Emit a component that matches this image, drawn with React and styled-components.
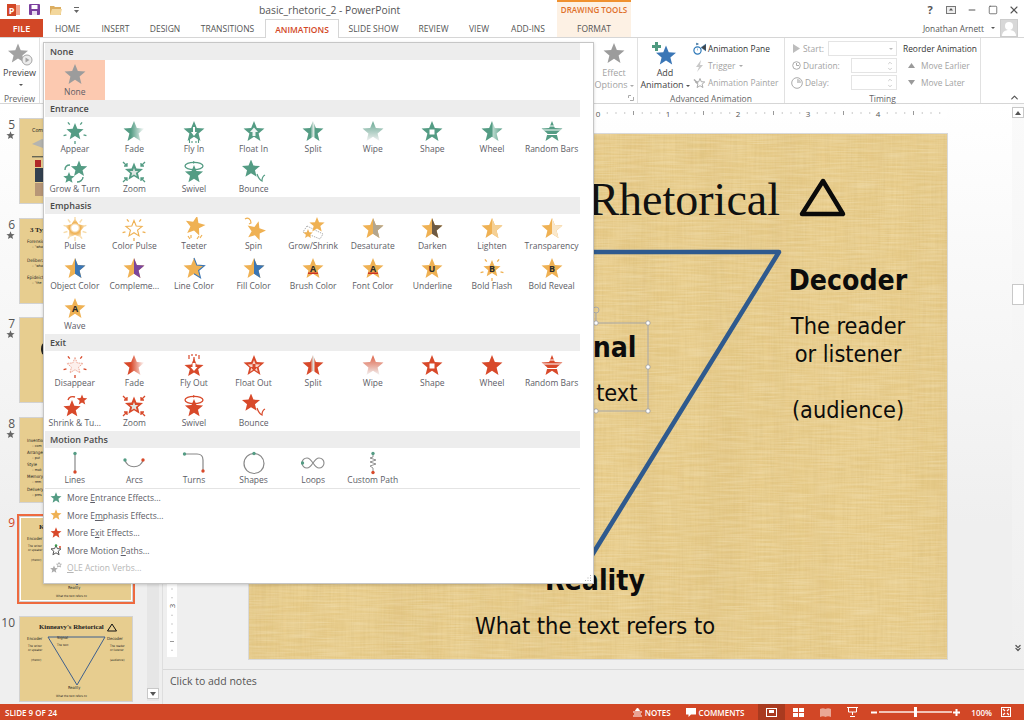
import React from "react";
import styled, { createGlobalStyle } from "styled-components";
import { Minus, Square, X, ChevronUp, ChevronDown, ChevronsDown } from "lucide-react";

const GlobalStyle = createGlobalStyle`
  html, body { margin: 0; padding: 0; background: #fff; }
  body { font-family: "Open Sans", "Liberation Sans", sans-serif; color: #444; }
  * { box-sizing: border-box; }
`;

const TONES = {
  green: "#549c84",
  orange: "#efb153",
  red: "#d8492a",
  gray: "#9c9c9c",
  blue: "#3a76b6",
  purple: "#7a469e",
};

const starPts = (cx, cy, R, r = R * 0.44) => {
  const out = [];
  for (let i = 0; i < 10; i++) {
    const a = (-90 + i * 36) * (Math.PI / 180);
    const d = i % 2 === 0 ? R : r;
    out.push([+(cx + d * Math.cos(a)).toFixed(2), +(cy + d * Math.sin(a)).toFixed(2)]);
  }
  return out;
};
const str = (p) => p.map((q) => q.join(",")).join(" ");
const starStr = (cx, cy, R, r) => str(starPts(cx, cy, R, r));
const rightHalf = (cx, cy, R) => str(starPts(cx, cy, R).slice(0, 6));

const Rays = ({ color, r1 = 10, r2 = 12, n = 5, offset = -54, width = 1.3 }) => {
  const lines = [];
  for (let i = 0; i < n; i++) {
    const a = (offset + (i * 360) / n) * (Math.PI / 180);
    lines.push(
      <line
        key={i}
        x1={12 + r1 * Math.cos(a)}
        y1={12 + r1 * Math.sin(a)}
        x2={12 + r2 * Math.cos(a)}
        y2={12 + r2 * Math.sin(a)}
        stroke={color}
        strokeWidth={width}
      />
    );
  }
  return <>{lines}</>;
};

const Corners = ({ c }) => (
  <g stroke={c} strokeWidth="1.3" fill="none">
    <path d="M1 2l4 4M5 3v3H2M23 2l-4 4M19 3v3h3M1 22l4-4M5 21v-3H2M23 22l-4-4M19 21v-3h3" />
  </g>
);

const Dot = ({ x, y, c }) => <circle cx={x} cy={y} r="1.7" fill={c} />;

const EffectIcon = ({ kind, tone = "green", letter, bar }) => {
  const c = TONES[tone];
  const id = `${kind}-${tone}`;
  const plain = <polygon points={starStr(12, 12, 11)} fill={c} />;
  let body = plain;
  if (kind === "appear") {
    body = (
      <>
        <polygon points={starStr(12, 12, 9)} fill={c} />
        <Rays color={c} r1={9} r2={12} />
      </>
    );
  } else if (kind === "fade" || kind === "wipe" || kind === "split" || kind === "wheel") {
    const stops = {
      fade: [[0, c], [0.35, c], [1, "#fff"]],
      wipe: [[0, c], [1, "#f2f2f2"]],
      split: [[0, c], [0.38, c], [0.52, "#dfe9e4"], [0.62, c], [1, c]],
      wheel: [[0, c], [0.5, c], [0.55, "#b9d9cd"], [1, c]],
    }[kind];
    const vertical = kind === "wipe";
    body = (
      <>
        <defs>
          <linearGradient id={id} x1="0" y1="0" x2={vertical ? "0" : "1"} y2={vertical ? "1" : "0"}>
            {stops.map(([o, col]) => <stop key={o} offset={o} stopColor={col} stopOpacity={kind === "wipe" && o === 0 ? 0.85 : 1} />)}
          </linearGradient>
        </defs>
        <polygon points={starStr(12, 12, 11)} fill={`url(#${id})`} />
      </>
    );
  } else if (kind === "flyin") {
    body = (
      <>
        {plain}
        <path d="M12 8l3 4h-2v5h-2v-5H9z" fill="#fff" transform="rotate(180 12 12)" />
        <path d="M7.500 19v4M10 21v2M14 21v2M16.500 19v4" stroke={c} strokeWidth="1.1" />
      </>
    );
  } else if (kind === "flyout") {
    body = (
      <>
        <polygon points={starStr(12, 14, 10)} fill={c} />
        <path d="M12 9l3.500 4h-2v4h-3v-4h-2z" fill="#fff" transform="rotate(180 12 13)" />
        <path d="M7 1v4M10 0v2M14 0v2M17 1v4M12 3v3" stroke={c} strokeWidth="1.2" />
      </>
    );
  } else if (kind === "floatin") {
    body = (
      <>
        {plain}
        <path d="M12 7.500l4 4.500h-2.500v4h-3v-4H8z" fill="#fff" opacity=".9" />
      </>
    );
  } else if (kind === "floatout") {
    body = (
      <>
        {plain}
        <polygon points={starStr(12, 12.5, 6.5)} fill="#f7d5c9" />
        <path d="M12 17l3.500-4h-2v-3h-3v3h-2z" fill={c} />
      </>
    );
  } else if (kind === "shape") {
    body = (
      <>
        {plain}
        <rect x="9.500" y="9.500" width="5" height="5" fill="#fff" />
      </>
    );
  } else if (kind === "bars") {
    body = (
      <>
        {plain}
        <path d="M0 6h24M0 10h24M0 14.500h24" stroke="#fff" strokeWidth="1.1" />
      </>
    );
  } else if (kind === "grow") {
    body = (
      <>
        <polygon points={starStr(16, 9, 8.5)} fill={c} />
        <polygon points={starStr(6, 18, 6)} fill={c} />
        <path d="M2 10c0-3 2-5 5-5M14 22c3 0 6-2 6-5" stroke={c} strokeWidth="1.4" fill="none" />
      </>
    );
  } else if (kind === "shrink") {
    body = (
      <>
        <polygon points={starStr(9, 15, 9)} fill={c} />
        <polygon points={starStr(19, 6, 5.5)} fill={c} />
        <path d="M5 6c1-3 4-4 7-3" stroke={c} strokeWidth="1.4" fill="none" />
      </>
    );
  } else if (kind === "zoom") {
    body = (
      <>
        <polygon points={starStr(12, 12, 9.5)} fill={c} />
        <polygon points={starStr(12, 12.5, 4.500)} fill="#dfe6e2" />
        <Corners c={c} />
      </>
    );
  } else if (kind === "swivel") {
    body = (
      <>
        <polygon points={starStr(12, 14.5, 9.5)} fill={c} />
        <ellipse cx="12" cy="6" rx="9" ry="3.600" fill="none" stroke={c} strokeWidth="1.3" />
        <path d="M11 1l3 1.400-3 1.400z" fill={c} />
      </>
    );
  } else if (kind === "bounce") {
    body = (
      <>
        <polygon points={starStr(9, 9, 9.5)} fill={c} />
        <path d="M15 14c1 3 3 6 5 7 0-3 1-5 3-6" stroke={c} strokeWidth="1.2" fill="none" />
      </>
    );
  } else if (kind === "pulse") {
    body = (
      <>
        <defs>
          <radialGradient id={id}>
            <stop offset="0.3" stopColor="#fff" />
            <stop offset="0.55" stopColor={c} />
            <stop offset="1" stopColor="#f9e2bb" />
          </radialGradient>
        </defs>
        <Rays color="#f7dcab" r1={8} r2={12} n={10} offset={-18} width={1.4} />
        <polygon points={starStr(12, 12, 10.5, 6)} fill={`url(#${id})`} />
      </>
    );
  } else if (kind === "colorpulse") {
    body = (
      <>
        <polygon points={starStr(12, 12, 8.5)} fill="#fff" stroke={c} strokeWidth="1.1" />
        <Rays color={c} r1={9} r2={12} />
      </>
    );
  } else if (kind === "teeter") {
    body = (
      <>
        <polygon points={starStr(13, 9, 10.5)} fill={c} transform="rotate(12 13 9)" />
        <path d="M6 19l2 3M9 18l0 3M17 19l-2 3M20 18l-2 3" stroke={c} strokeWidth="1.2" />
      </>
    );
  } else if (kind === "spin") {
    body = (
      <>
        <polygon points={starStr(14, 14, 10)} fill={c} transform="rotate(15 14 14)" />
        <path d="M3 2c3-2 6 0 6 4l-2 1" stroke={c} strokeWidth="1.2" fill="none" />
      </>
    );
  } else if (kind === "growshrink") {
    body = (
      <>
        <path d="M6 9l16 8-3 5L2 15z" fill="#fff" stroke="#999" strokeWidth=".8" strokeDasharray="1.400 1" />
        <polygon points={starStr(16, 8, 8)} fill={c} />
        <polygon points={starStr(7, 17, 5)} fill={c} />
      </>
    );
  } else if (kind === "half") {
    body = (
      <>
        {plain}
        <polygon points={rightHalf(12, 12, 11)} fill={TONES[letter] || letter} />
      </>
    );
  } else if (kind === "linecolor") {
    body = (
      <>
        {plain}
        <polyline points={rightHalf(12, 12, 11)} fill="none" stroke={TONES.blue} strokeWidth="1.1" />
      </>
    );
  } else if (kind === "text" || kind === "flash") {
    body = (
      <>
        {kind === "flash" ? (
          <>
            <polygon points={starStr(12, 12, 9)} fill={c} />
            <Rays color={c} r1={9} r2={12} />
          </>
        ) : plain}
        <text x="12" y="15" textAnchor="middle" fontSize="9" fontWeight="700" fontFamily="Open Sans, sans-serif" fill="#2a2a2a">{letter}</text>
        {bar && <rect x="7" y="15.500" width="10" height="1.400" fill="#c8281e" />}
      </>
    );
  } else if (kind === "disappear") {
    body = (
      <>
        <polygon points={starStr(12, 12, 8.5)} fill="#fdf0ec" stroke="#eba08d" strokeWidth=".9" strokeDasharray="1.600 .8" />
        <Rays color={c} r1={9} r2={12} />
      </>
    );
  } else if (kind === "lines") {
    body = (
      <>
        <path d="M12 2v19" stroke="#888" strokeWidth="1.2" />
        <Dot x={12} y={2.5} c={TONES.green} />
        <Dot x={12} y={21} c={TONES.red} />
      </>
    );
  } else if (kind === "arcs") {
    body = (
      <>
        <path d="M3 9c2 9 16 9 18 0" stroke="#888" strokeWidth="1.2" fill="none" />
        <Dot x={3} y={9} c={TONES.green} />
        <Dot x={21} y={9} c={TONES.red} />
      </>
    );
  } else if (kind === "turns") {
    body = (
      <>
        <path d="M2 3h13c4 0 6 2 6 6v11" stroke="#888" strokeWidth="1.2" fill="none" />
        <Dot x={2.5} y={3} c={TONES.green} />
        <Dot x={21} y={20} c={TONES.red} />
      </>
    );
  } else if (kind === "shapes") {
    body = (
      <>
        <circle cx="12" cy="12.500" r="10" stroke="#888" strokeWidth="1.2" fill="none" />
        <Dot x={12} y={2.5} c={TONES.green} />
      </>
    );
  } else if (kind === "loops") {
    body = (
      <>
        <path d="M12 12c-2-3-4-5-6-5a5 5 0 0 0 0 10c2 0 4-2 6-5s4-5 6-5a5 5 0 0 1 0 10c-2 0-4-2-6-5z" stroke="#888" strokeWidth="1.1" fill="none" />
        <Dot x={1.5} y={12} c={TONES.green} />
      </>
    );
  } else if (kind === "custom") {
    body = (
      <>
        <path d="M12 3v3l-3 1 6 2-6 2 6 2-6 2 3 2v3" stroke="#888" strokeWidth=".9" fill="none" />
        <Dot x={12} y={2.5} c={TONES.green} />
        <Dot x={12} y={21.5} c={TONES.red} />
      </>
    );
  }
  return <svg width="24" height="24" viewBox="0 0 24 24">{body}</svg>;
};

const effect = (label, kind, tone, extra) => ({ label, kind, tone, ...extra });

const SECTIONS = [
  { title: "None", items: [effect("None", "plain", "gray", { active: true })] },
  {
    title: "Entrance",
    items: [
      effect("Appear", "appear", "green"), effect("Fade", "fade", "green"), effect("Fly In", "flyin", "green"),
      effect("Float In", "floatin", "green"), effect("Split", "split", "green"), effect("Wipe", "wipe", "green"),
      effect("Shape", "shape", "green"), effect("Wheel", "wheel", "green"), effect("Random Bars", "bars", "green"),
      effect("Grow & Turn", "grow", "green"), effect("Zoom", "zoom", "green"), effect("Swivel", "swivel", "green"),
      effect("Bounce", "bounce", "green"),
    ],
  },
  {
    title: "Emphasis",
    items: [
      effect("Pulse", "pulse", "orange"), effect("Color Pulse", "colorpulse", "orange"), effect("Teeter", "teeter", "orange"),
      effect("Spin", "spin", "orange"), effect("Grow/Shrink", "growshrink", "orange"),
      effect("Desaturate", "half", "orange", { letter: "#b3a68f" }), effect("Darken", "half", "orange", { letter: "#6d5a44" }),
      effect("Lighten", "half", "orange", { letter: "#f5d094" }), effect("Transparency", "half", "orange", { letter: "#fae8cb" }),
      effect("Object Color", "half", "orange", { letter: "blue" }), effect("Compleme...", "half", "orange", { letter: "purple" }),
      effect("Line Color", "linecolor", "orange"), effect("Fill Color", "half", "orange", { letter: "blue" }),
      effect("Brush Color", "text", "orange", { letter: "A", bar: true }), effect("Font Color", "text", "orange", { letter: "A", bar: true }),
      effect("Underline", "text", "orange", { letter: "U" }), effect("Bold Flash", "flash", "orange", { letter: "B" }),
      effect("Bold Reveal", "text", "orange", { letter: "B" }), effect("Wave", "text", "orange", { letter: "A" }),
    ],
  },
  {
    title: "Exit",
    items: [
      effect("Disappear", "disappear", "red"), effect("Fade", "fade", "red"), effect("Fly Out", "flyout", "red"),
      effect("Float Out", "floatout", "red"), effect("Split", "split", "red"), effect("Wipe", "wipe", "red"),
      effect("Shape", "shape", "red"), effect("Wheel", "plain", "red"), effect("Random Bars", "bars", "red"),
      effect("Shrink & Tu...", "shrink", "red"), effect("Zoom", "zoom", "red"), effect("Swivel", "swivel", "red"),
      effect("Bounce", "bounce", "red"),
    ],
  },
  {
    title: "Motion Paths",
    items: [
      effect("Lines", "lines"), effect("Arcs", "arcs"), effect("Turns", "turns"),
      effect("Shapes", "shapes"), effect("Loops", "loops"), effect("Custom Path", "custom"),
    ],
  },
];

const Page = styled.div`
  position: relative;
  width: 1024px;
  height: 720px;
  overflow: hidden;
  display: flex;
  flex-direction: column;
  background: #fff;
`;

const TitleBar = styled.div`
  height: 19px;
  display: flex;
  align-items: center;
  position: relative;
`;

const QuickAccess = styled.div`
  display: flex;
  align-items: center;
  gap: 9px;
  padding-left: 7px;
  width: 259px;
`;

const DocTitle = styled.div`
  width: 298px;
  font-size: 10.3px;
  color: #555;
`;

const ToolsTitle = styled.div`
  width: 74px;
  height: 19px;
  background: #fdf1e4;
  border-top: 2px solid #f0912f;
  color: #e0702a;
  font-size: 8px;
  font-weight: 600;
  text-align: center;
  line-height: 16px;
`;

const WindowButtons = styled.div`
  margin-left: auto;
  display: flex;
  align-items: center;
  gap: 9px;
  padding-right: 4px;
  color: #555;
`;

const WinButton = styled.div`
  width: 12px;
  display: flex;
  justify-content: center;
  font-size: 11px;
  font-weight: 700;
`;

const TabRow = styled.div`
  height: 19px;
  display: flex;
  align-items: stretch;
  border-bottom: 1px solid #d6d6d6;
`;

const FileTab = styled.div`
  width: 43px;
  margin-right: 1px;
  background: #d24726;
  color: #fff;
  font-size: 9px;
  font-weight: 600;
  display: flex;
  align-items: center;
  justify-content: center;
`;

const Tab = styled.div`
  width: ${(p) => p.$w}px;
  font-size: 8.5px;
  white-space: nowrap;
  display: flex;
  align-items: center;
  justify-content: center;
  color: ${(p) => (p.$active ? "#d24726" : "#555")};
  background: ${(p) => (p.$active ? "#fff" : p.$tool ? "#fdf1e4" : "transparent")};
  height: ${(p) => (p.$active ? "19px" : "auto")};
  border: ${(p) => (p.$active ? "1px solid #d6d6d6" : "none")};
  border-bottom: none;
  font-weight: ${(p) => (p.$active ? 600 : 400)};
`;

const UserBox = styled.div`
  margin-left: auto;
  display: flex;
  align-items: center;
  font-size: 8.3px;
  color: #555;
  padding-right: 6px;
  gap: 5px;
`;

const Avatar = styled.div`
  width: 18px;
  height: 18px;
  background: #d8d8d8;
  border: 1px solid #ccc;
  overflow: hidden;
`;

const Ribbon = styled.div`
  height: 66px;
  display: flex;
  background: #fff;
  border-bottom: 1px solid #d6d6d6;
`;

const Group = styled.div`
  width: ${(p) => p.$w}px;
  display: flex;
  flex-direction: column;
  flex: none;
  border-right: 1px solid #e1e1e1;
`;

const HiddenGroups = styled.div`
  width: 555px;
  flex: none;
`;

const GroupBody = styled.div`
  flex: 1;
  display: flex;
  padding-top: 2px;
`;

const GroupLabel = styled.div`
  height: 12px;
  font-size: 8.5px;
  line-height: 15px;
  text-align: center;
  color: #666;
  position: relative;
`;

const BigButton = styled.div`
  width: ${(p) => p.$w || 40}px;
  display: flex;
  flex-direction: column;
  align-items: center;
  font-size: 9px;
  line-height: 12px;
  color: ${(p) => (p.$off ? "#a3a3a3" : "#444")};
  white-space: nowrap;
  padding-top: 2px;
`;

const BigIcon = styled.div`
  height: 25px;
`;

const Caret = styled.span`
  display: inline-block;
  margin-left: 2px;
  vertical-align: middle;
  border-left: 2px solid transparent;
  border-right: 2px solid transparent;
  border-top: 2.5px solid ${(p) => p.$c || "#555"};
`;

const Launcher = styled.svg`
  position: absolute;
  right: 3px;
  top: 4px;
`;

const Col = styled.div`
  display: flex;
  flex-direction: column;
  width: ${(p) => (p.$w ? `${p.$w}px` : "auto")};
  margin-left: ${(p) => p.$ml || 0}px;
`;

const ListRow = styled.div`
  height: 17px;
  display: flex;
  align-items: center;
  gap: 2px;
  font-size: 8.4px;
  white-space: nowrap;
  color: ${(p) => (p.$off ? "#a3a3a3" : p.$strong ? "#333" : "#444")};
`;

const RowIcon = styled.span`
  width: ${(p) => p.$w || 13}px;
  display: flex;
  justify-content: center;
  flex: none;
`;

const Field = styled.div`
  margin-left: auto;
  width: ${(p) => p.$w}px;
  height: 15px;
  border: 1px solid #e4e4e4;
  display: flex;
  align-items: center;
  justify-content: flex-end;
  padding-right: 3px;
  color: #bdbdbd;
`;

const Spinner = styled.div`
  display: flex;
  flex-direction: column;
  align-items: center;
  line-height: 0;
  color: #9a9a9a;
`;

const CollapseCell = styled.div`
  flex: 1;
  display: flex;
  align-items: flex-end;
  justify-content: flex-end;
  padding: 0 4px 0 0;
  color: #555;
`;

const Main = styled.div`
  flex: 1;
  min-height: 0;
  display: flex;
  background: linear-gradient(#fff, #efefef 70%);
`;

const ThumbPanel = styled.div`
  width: 163px;
  flex: none;
  display: flex;
  border-right: 1px solid #dedede;
`;

const ThumbList = styled.div`
  width: 148px;
  height: 599px;
  overflow: hidden;
  padding-top: 14px;
  display: flex;
  flex-direction: column;
  gap: 13.5px;
`;

const ThumbRow = styled.div`
  display: flex;
  flex: none;
  height: 86px;
`;

const ThumbIndex = styled.div`
  width: 19px;
  flex: none;
  padding-right: 4px;
  display: flex;
  flex-direction: column;
  align-items: flex-end;
  font-size: 12px;
  line-height: 13px;
  color: ${(p) => (p.$current ? "#d24726" : "#555")};
`;

const Thumb = styled.div`
  position: relative;
  width: 114px;
  height: 86px;
  flex: none;
  background: #e7cd8f;
  border: 1px solid #d2d2d2;
  overflow: visible;
  outline: ${(p) => (p.$current ? "2px solid #ee6a3f" : "none")};
  box-shadow: ${(p) => (p.$current ? "inset 0 0 0 1px #fff" : "none")};
`;

const MiniText = styled.div`
  position: absolute;
  left: ${(p) => p.$x}px;
  top: ${(p) => p.$y}px;
  font-family: "DejaVu Sans Condensed", "DejaVu Sans", sans-serif;
  font-size: ${(p) => p.$s || 4}px;
  font-weight: ${(p) => (p.$b ? 700 : 400)};
  color: #222;
  white-space: nowrap;
  line-height: 1;
`;

const MiniTitle = styled(MiniText)`
  font-family: "Liberation Serif", serif;
  font-weight: 700;
`;

const MiniDraw = styled.svg`
  position: absolute;
  left: 0;
  top: 0;
`;

const ThumbScroll = styled.div`
  width: 12px;
  margin-right: 3px;
  height: 597px;
  background: #e6e6e6;
  display: flex;
  flex-direction: column;
  justify-content: flex-end;
`;

const ScrollButton = styled.div`
  width: 12px;
  height: 11px;
  background: #fff;
  border: 1px solid #c8c8c8;
  display: flex;
  align-items: center;
  justify-content: center;
  margin-bottom: ${(p) => p.$mb || 0}px;
  color: #555;
`;

const Editor = styled.div`
  flex: 1;
  min-width: 0;
  display: flex;
  flex-direction: column;
`;

const EditRow = styled.div`
  flex: 1;
  min-height: 0;
  display: flex;
`;

const Canvas = styled.div`
  flex: 1;
  padding-top: 4px;
`;

const HRuler = styled.svg`
  display: block;
  margin-left: 86px;
  background: #fff;
`;

const SlideRow = styled.div`
  display: flex;
  margin-top: 16px;
  padding-left: 4px;
`;

const VRuler = styled.svg`
  width: 10px;
  height: 523px;
  background: #fff;
  flex: none;
  margin-right: 72px;
`;

const Slide = styled.div`
  position: relative;
  width: 698px;
  height: 525px;
  flex: none;
  background: #e8cc8a;
  box-shadow: 0 0 0 1px #d9d9d9;
  overflow: hidden;
`;

const Texture = styled.svg`
  position: absolute;
  inset: 0;
  width: 100%;
  height: 100%;
`;

const SlideTitle = styled.div`
  position: absolute;
  right: 167px;
  top: 39px;
  font-family: "Liberation Serif", serif;
  font-size: 46px;
  color: #111;
  white-space: nowrap;
`;

const SlideText = styled.div`
  position: absolute;
  left: ${(p) => p.$x}px;
  top: ${(p) => p.$y}px;
  transform: translate(-50%, -50%);
  font-family: "DejaVu Sans Condensed", "DejaVu Sans", sans-serif;
  font-size: ${(p) => p.$s}px;
  font-weight: ${(p) => (p.$b ? 700 : 400)};
  color: #0c0c0c;
  white-space: nowrap;
`;

const Overlay = styled.svg`
  position: absolute;
  left: 0;
  top: 0;
`;

const VScroll = styled.div`
  width: 12px;
  flex: none;
  display: flex;
  flex-direction: column;
  align-items: center;
  padding-top: 3px;
  position: relative;
  background: linear-gradient(#fafafa, #efefef);
`;

const ScrollThumb = styled.div`
  width: 12px;
  height: 21px;
  margin-top: 166px;
  background: #fff;
  border: 1px solid #c8c8c8;
`;

const PageArrows = styled.div`
  margin-top: auto;
  margin-bottom: 16px;
  color: #555;
  line-height: 0;
`;

const NotesPane = styled.div`
  height: 35px;
  flex: none;
  background: #efefef;
  border-top: 1px solid #d9d9d9;
  font-size: 10.5px;
  color: #555;
  padding: 4px 7px;
`;

const StatusBar = styled.div`
  height: 16px;
  flex: none;
  background: #d24726;
  color: #fff;
  display: flex;
  align-items: center;
  font-size: 8px;
  font-weight: 600;
  padding-left: 5px;
`;

const StatusRight = styled.div`
  margin-left: auto;
  display: flex;
  align-items: center;
  height: 100%;
`;

const StatusItem = styled.div`
  display: flex;
  align-items: center;
  gap: ${(p) => p.$gap ?? 3}px;
  margin-left: ${(p) => p.$ml || 0}px;
  margin-right: ${(p) => p.$mr || 0}px;
`;

const ViewButton = styled.div`
  width: 27px;
  height: 100%;
  display: flex;
  align-items: center;
  justify-content: center;
  background: ${(p) => (p.$on ? "#a93a1f" : "transparent")};
  opacity: ${(p) => (p.$dim ? 0.75 : 1)};
`;

const ZoomTrack = styled.div`
  position: relative;
  width: 73px;
  height: 2px;
  margin: 0 1px;
  background: #f2c4b6;
`;

const ZoomThumb = styled.div`
  position: absolute;
  left: 35px;
  top: -4px;
  width: 3px;
  height: 10px;
  background: #fff;
`;

const Menu = styled.div`
  position: absolute;
  left: 43px;
  top: 42px;
  width: 551px;
  height: 542px;
  padding: 0 13px 0 1px;
  background: #fff;
  border: 1px solid #c6c6c6;
  box-shadow: 0 1px 3px rgba(0, 0, 0, 0.18);
`;

const SectionHead = styled.div`
  height: 17px;
  background: #ededed;
  font-size: 9px;
  font-weight: 600;
  line-height: 17px;
  color: #4a4a4a;
  padding-left: 5px;
`;

const EffectGrid = styled.div`
  display: grid;
  grid-template-columns: repeat(9, 59.6px);
  grid-auto-rows: 40px;
`;

const EffectCell = styled.div`
  display: flex;
  flex-direction: column;
  align-items: center;
  padding-top: 3px;
  background: ${(p) => (p.$active ? "#fcc9b0" : "transparent")};
`;

const EffectLabel = styled.div`
  font-size: 8.5px;
  line-height: 12px;
  margin-top: -1px;
  white-space: nowrap;
  color: #5d5d66;
`;

const MoreList = styled.div`
  border-top: 1px solid #e4e4e4;
`;

const MoreItem = styled.div`
  height: 17.5px;
  display: flex;
  align-items: center;
  font-size: 8.5px;
  color: ${(p) => (p.$off ? "#b6b6b6" : "#5d5d66")};
`;

const MoreIcon = styled.span`
  width: 21px;
  display: flex;
  justify-content: center;
  margin-right: 1px;
`;

const Grip = styled.svg`
  position: absolute;
  right: 1px;
  bottom: 1px;
`;

const MiniStar = ({ c = "#666", size = 9 }) => (
  <svg width={size} height={size} viewBox="0 0 24 24">
    <polygon points={starStr(12, 12, 11.5)} fill={c} />
  </svg>
);

const TriangleSlide = () => (
  <>
    <MiniTitle $x={19} $y={7} $s={6.8}>Kinneavy's Rhetorical</MiniTitle>
    <MiniDraw width="114" height="86">
      <path d="M92 7l4.500 7h-9z" fill="none" stroke="#111" strokeWidth="1" />
      <path d="M28 20h57L57 68z" fill="none" stroke="#3d5f8e" strokeWidth="1" />
    </MiniDraw>
    <MiniText $x={7} $y={20} $s={4.2}>Encoder</MiniText>
    <MiniText $x={37} $y={19} $s={4}>Signal</MiniText>
    <MiniText $x={87} $y={20} $s={4.2}>Decoder</MiniText>
    <MiniText $x={8} $y={28} $s={3}>The writer</MiniText>
    <MiniText $x={8} $y={32} $s={3}>or speaker</MiniText>
    <MiniText $x={11} $y={42} $s={3}>(rhetor)</MiniText>
    <MiniText $x={37} $y={27} $s={3}>The text</MiniText>
    <MiniText $x={90} $y={28} $s={3}>The reader</MiniText>
    <MiniText $x={90} $y={32} $s={3}>or listener</MiniText>
    <MiniText $x={90} $y={42} $s={3}>(audience)</MiniText>
    <MiniText $x={48} $y={69} $s={4}>Reality</MiniText>
    <MiniText $x={36} $y={78} $s={3}>What the text refers to</MiniText>
  </>
);

const THUMBS = [
  {
    n: 5, star: true,
    body: (
      <>
        <MiniText $x={12} $y={9} $s={5.4}>Communication</MiniText>
        <MiniDraw width="114" height="86">
          <path d="M12 25l10-5 10 4-9 5z" fill="#b4b4b0" />
          <rect x="12" y="37" width="14" height="1.400" fill="#665" />
          <rect x="15" y="41" width="6" height="7" fill="#b02828" />
          <rect x="15" y="49" width="12" height="14" fill="#33404f" />
          <rect x="15" y="64" width="14" height="13" fill="#b79677" />
        </MiniDraw>
      </>
    ),
  },
  {
    n: 6, star: true,
    body: (
      <>
        <MiniTitle $x={10} $y={8} $s={7}>3 Types</MiniTitle>
        <MiniText $x={7} $y={21} $s={4.6}>Forensic</MiniText>
        <MiniText $x={12} $y={27} $s={3.6}>– "what</MiniText>
        <MiniText $x={7} $y={40} $s={4.6}>Deliberative</MiniText>
        <MiniText $x={12} $y={46} $s={3.6}>– "what</MiniText>
        <MiniText $x={7} $y={57} $s={4.6}>Epideictic</MiniText>
        <MiniText $x={12} $y={63} $s={3.6}>– "the</MiniText>
      </>
    ),
  },
  {
    n: 7, star: true,
    body: (
      <MiniDraw width="114" height="86">
        <ellipse cx="24" cy="31" rx="3" ry="6" fill="#222" />
      </MiniDraw>
    ),
  },
  {
    n: 8, star: true,
    body: (
      <>
        <MiniText $x={7} $y={21} $s={4.4}>Invention</MiniText>
        <MiniText $x={12} $y={27} $s={3.6}>– com</MiniText>
        <MiniText $x={7} $y={33} $s={4.4}>Arrangement</MiniText>
        <MiniText $x={12} $y={39} $s={3.6}>– put</MiniText>
        <MiniText $x={7} $y={45} $s={4.4}>Style</MiniText>
        <MiniText $x={12} $y={51} $s={3.6}>– mak</MiniText>
        <MiniText $x={7} $y={57} $s={4.4}>Memory</MiniText>
        <MiniText $x={12} $y={63} $s={3.6}>– rem</MiniText>
        <MiniText $x={7} $y={70} $s={4.4}>Delivery</MiniText>
        <MiniText $x={12} $y={76} $s={3.6}>– pres</MiniText>
      </>
    ),
  },
  { n: 9, current: true, body: <TriangleSlide /> },
  { n: 10, body: <TriangleSlide /> },
];

const TABS = [
  ["HOME", 47], ["INSERT", 49], ["DESIGN", 50], ["TRANSITIONS", 75], ["ANIMATIONS", 74, true],
  ["SLIDE SHOW", 69], ["REVIEW", 51], ["VIEW", 40], ["ADD-INS", 58],
];

const rulerTicks = (len, center) => {
  const marks = [];
  for (let i = -48; i <= 48; i++) {
    const p = center + i * 8.75;
    if (p < 2 || p > len - 2) continue;
    marks.push({ p, i });
  }
  return marks;
};

const HorizontalRuler = () => (
  <HRuler width="698" height="10" viewBox="0 0 698 10">
    {rulerTicks(698, 349).map(({ p, i }) => {
      if (i % 8 === 0) {
        return (
          <text key={i} x={p} y="8.500" textAnchor="middle" fontSize="8" fill="#555" fontFamily="Open Sans, sans-serif">
            {Math.abs(i / 8)}
          </text>
        );
      }
      return <rect key={i} x={p} y={i % 4 === 0 ? 3 : 4.5} width="1" height={i % 4 === 0 ? 4 : 1} fill="#999" />;
    })}
  </HRuler>
);

const VerticalRuler = () => (
  <VRuler viewBox="0 0 10 523">
    {rulerTicks(523, 262).map(({ p, i }) => {
      if (i % 8 === 0) {
        return (
          <text key={i} x="5" y={p} transform={`rotate(-90 5 ${p})`} dy="3" textAnchor="middle" fontSize="8" fill="#555" fontFamily="Open Sans, sans-serif">
            {Math.abs(i / 8)}
          </text>
        );
      }
      return <rect key={i} x={i % 4 === 0 ? 3 : 4.5} y={p} width={i % 4 === 0 ? 4 : 1} height="1" fill="#999" />;
    })}
  </VRuler>
);

const Handle = ({ x, y }) => <circle cx={x} cy={y} r="2.200" fill="#fff" stroke="#9b9b9b" strokeWidth=".8" />;

export default function App() {
  return (
    <Page>
      <GlobalStyle />
      <TitleBar>
        <QuickAccess>
          <svg width="13" height="12" viewBox="0 0 13 12">
            <rect x="5" y="1" width="8" height="10" fill="#f3a48c" />
            <rect y="0" width="9" height="12" fill="#d24726" />
            <text x="4.500" y="9.500" textAnchor="middle" fontSize="9" fontWeight="700" fill="#fff" fontFamily="Open Sans, sans-serif">P</text>
          </svg>
          <svg width="11" height="11" viewBox="0 0 11 11">
            <rect width="11" height="11" rx="1" fill="#7b3f9e" />
            <rect x="2.500" y="1" width="6" height="4" fill="#fff" />
            <rect x="3" y="7" width="5" height="4" fill="#e8dcef" />
          </svg>
          <svg width="12" height="10" viewBox="0 0 12 10" style={{ marginLeft: 1 }}>
            <path d="M0 1h4l1 1h6v8H0z" fill="#dcae62" />
            <path d="M2 4h10l-1.500 6H0z" fill="#f3d79c" />
          </svg>
          <svg width="6" height="8" viewBox="0 0 6 8" style={{ marginLeft: 3 }}>
            <rect y="1" width="5" height="1" fill="#666" />
            <path d="M0 4h5L2.500 7z" fill="#666" />
          </svg>
        </QuickAccess>
        <DocTitle>basic_rhetoric_2 - PowerPoint</DocTitle>
        <ToolsTitle>DRAWING TOOLS</ToolsTitle>
        <WindowButtons>
          <WinButton>?</WinButton>
          <WinButton>
            <svg width="10" height="8" viewBox="0 0 10 8">
              <rect x=".5" y=".5" width="9" height="7" fill="#eee" stroke="#777" />
              <path d="M5 2l2 2.500H3z" fill="#555" />
            </svg>
          </WinButton>
          <WinButton><Minus size={10} strokeWidth={2.4} /></WinButton>
          <WinButton><Square size={10} strokeWidth={1.8} /></WinButton>
          <WinButton><X size={12} strokeWidth={2.2} /></WinButton>
        </WindowButtons>
      </TitleBar>

      <TabRow>
        <FileTab>FILE</FileTab>
        {TABS.map(([name, w, active]) => (
          <Tab key={name} $w={w} $active={active}>{name}</Tab>
        ))}
        <Tab $w={74} $tool>FORMAT</Tab>
        <UserBox>
          Jonathan Arnett
          <Caret $c="#555" />
          <Avatar>
            <svg width="16" height="16" viewBox="0 0 16 16">
              <circle cx="8" cy="6" r="4" fill="#fff" />
              <path d="M1 16c0-4 3-6 7-6s7 2 7 6z" fill="#fff" />
            </svg>
          </Avatar>
        </UserBox>
      </TabRow>

      <Ribbon>
        <Group $w={40}>
          <GroupBody>
            <BigButton>
              <BigIcon>
                <svg width="28" height="25" viewBox="0 0 28 25">
                  <polygon points={starStr(12, 12, 10.5)} fill="#a2a2a2" />
                  <circle cx="21" cy="18" r="5" fill="#ececec" stroke="#a5a5a5" />
                  <path d="M19.500 15.500l4 2.500-4 2.500z" fill="#a5a5a5" />
                </svg>
              </BigIcon>
              Preview
              <Caret style={{ marginTop: 5 }} />
            </BigButton>
          </GroupBody>
          <GroupLabel>Preview</GroupLabel>
        </Group>
        <HiddenGroups />
        <Group $w={43}>
          <GroupBody>
            <BigButton $w={38} $off>
              <BigIcon><EffectIcon kind="plain" tone="gray" /></BigIcon>
              Effect
              <span>Options<Caret $c="#aaa" /></span>
            </BigButton>
          </GroupBody>
          <GroupLabel>
            <Launcher width="6" height="6" viewBox="0 0 6 6">
              <path d="M.5 3V.5H3M5.500 2v3.500H2" fill="none" stroke="#aaa" />
            </Launcher>
          </GroupLabel>
        </Group>
        <Group $w={147}>
          <GroupBody>
            <BigButton $w={54}>
              <BigIcon>
                <svg width="28" height="25" viewBox="0 0 28 25">
                  <polygon points={starStr(15, 14, 10.5)} fill="#3a76b6" />
                  <path d="M4 0h3v3h3v3H7v3H4V6H1V3h3z" fill="#4f9a80" />
                </svg>
              </BigIcon>
              Add
              <span>Animation<Caret /></span>
            </BigButton>
            <Col>
              <ListRow $strong>
                <RowIcon $w={14}>
                  <svg width="13" height="13" viewBox="0 0 13 13">
                    <circle cx="4.500" cy="8.500" r="3.600" fill="none" stroke="#2d78b8" strokeWidth="1.2" />
                    <path d="M3.500 1l2 1-2 1zM4.500 8.500V6.500M13 2v7L8 5.500z" fill="#444" stroke="#2d78b8" strokeWidth=".5" />
                  </svg>
                </RowIcon>
                Animation Pane
              </ListRow>
              <ListRow $off>
                <RowIcon $w={14}>
                  <svg width="9" height="12" viewBox="0 0 9 12"><path d="M6 0L1 7h3l-2 5 6-7H5z" fill="#c9c9c9" /></svg>
                </RowIcon>
                Trigger<Caret $c="#aaa" />
              </ListRow>
              <ListRow $off>
                <RowIcon $w={14}>
                  <svg width="13" height="12" viewBox="0 0 24 24">
                    <polygon points={starStr(13, 13, 10)} fill="none" stroke="#aaa" strokeWidth="2" />
                    <path d="M1 5l8 8" stroke="#aaa" strokeWidth="3" />
                  </svg>
                </RowIcon>
                Animation Painter
              </ListRow>
            </Col>
          </GroupBody>
          <GroupLabel>Advanced Animation</GroupLabel>
        </Group>
        <Group $w={196}>
          <GroupBody>
            <Col $w={106} $ml={6}>
              <ListRow $off>
                <RowIcon $w={10}><svg width="7" height="9" viewBox="0 0 7 9"><path d="M0 0l7 4.500L0 9z" fill="#bdbdbd" /></svg></RowIcon>
                Start:
                <Field $w={69}><Caret $c="#bbb" /></Field>
              </ListRow>
              <ListRow $off>
                <RowIcon $w={10}>
                  <svg width="9" height="9" viewBox="0 0 9 9"><circle cx="4.500" cy="4.500" r="3.800" fill="none" stroke="#aaa" /><path d="M4.500 2v2.500H7" fill="none" stroke="#aaa" /></svg>
                </RowIcon>
                Duration:
                <Field $w={46}>
                  <Spinner><ChevronUp size={6} /><ChevronDown size={6} /></Spinner>
                </Field>
              </ListRow>
              <ListRow $off>
                <RowIcon $w={12}>
                  <svg width="12" height="12" viewBox="0 0 12 12"><circle cx="6" cy="6" r="5.300" fill="none" stroke="#aaa" /><path d="M6 6V2a4 4 0 0 1 4 4z" fill="#ccc" /></svg>
                </RowIcon>
                Delay:
                <Field $w={46}>
                  <Spinner><ChevronUp size={6} /><ChevronDown size={6} /></Spinner>
                </Field>
              </ListRow>
            </Col>
            <Col $ml={6}>
              <ListRow $strong>Reorder Animation</ListRow>
              <ListRow $off>
                <RowIcon $w={16}><svg width="7" height="5" viewBox="0 0 7 5"><path d="M3.500 0L7 5H0z" fill="#9a9a9a" /></svg></RowIcon>
                Move Earlier
              </ListRow>
              <ListRow $off>
                <RowIcon $w={16}><svg width="7" height="5" viewBox="0 0 7 5"><path d="M0 0h7L3.500 5z" fill="#9a9a9a" /></svg></RowIcon>
                Move Later
              </ListRow>
            </Col>
          </GroupBody>
          <GroupLabel>Timing</GroupLabel>
        </Group>
        <CollapseCell><ChevronUp size={11} strokeWidth={2.6} /></CollapseCell>
      </Ribbon>

      <Main>
        <ThumbPanel>
          <ThumbList>
            {THUMBS.map((t) => (
              <ThumbRow key={t.n}>
                <ThumbIndex $current={t.current}>
                  {t.n}
                  {t.star && <MiniStar />}
                </ThumbIndex>
                <Thumb $current={t.current}>{t.body}</Thumb>
              </ThumbRow>
            ))}
          </ThumbList>
          <ThumbScroll>
            <ScrollButton $mb={2}>
              <svg width="6" height="4" viewBox="0 0 6 4"><path d="M0 0h6L3 4z" fill="#555" /></svg>
            </ScrollButton>
          </ThumbScroll>
        </ThumbPanel>
        <Editor>
          <EditRow>
            <Canvas>
              <HorizontalRuler />
              <SlideRow>
                <VerticalRuler />
                <Slide>
                  <Texture>
                    <filter id="bands" x="0" y="0" width="100%" height="100%">
                      <feTurbulence type="fractalNoise" baseFrequency="0.025 0.0015" numOctaves="2" seed="11" />
                      <feColorMatrix values="0 0 0 0 0.72  0 0 0 0 0.52  0 0 0 0 0.2  1 0 0 0 -0.35" />
                    </filter>
                    <filter id="warp" x="0" y="0" width="100%" height="100%">
                      <feTurbulence type="fractalNoise" baseFrequency="0.6 0.025" numOctaves="2" seed="5" />
                      <feColorMatrix values="0 0 0 0 0.66  0 0 0 0 0.48  0 0 0 0 0.18  0.6 0 0 0 -0.2" />
                    </filter>
                    <filter id="weft" x="0" y="0" width="100%" height="100%">
                      <feTurbulence type="fractalNoise" baseFrequency="0.03 0.6" numOctaves="2" seed="9" />
                      <feColorMatrix values="0 0 0 0 1  0 0 0 0 0.93  0 0 0 0 0.74  0.5 0 0 0 -0.16" />
                    </filter>
                    <rect width="100%" height="100%" filter="url(#bands)" />
                    <rect width="100%" height="100%" filter="url(#warp)" />
                    <rect width="100%" height="100%" filter="url(#weft)" />
                  </Texture>
                  <SlideTitle>Kinneavy's Rhetorical</SlideTitle>
                  <Overlay width="698" height="525" viewBox="0 0 698 525">
                    <path d="M574 47l20 33h-41z" fill="none" stroke="#0a0a0a" strokeWidth="4.500" strokeLinejoin="round" />
                    <path d="M100 118H530L340 426" fill="none" stroke="#2f5a8e" strokeWidth="4.600" strokeLinejoin="round" />
                    <rect x="300" y="189" width="99" height="88" fill="none" stroke="#a8a8a8" strokeWidth="1" />
                    <Handle x={347} y={189} />
                    <Handle x={399} y={189} />
                    <Handle x={399} y={233} />
                    <Handle x={347} y={277} />
                    <Handle x={399} y={277} />
                    <path d="M347 187v-8" stroke="#a8a8a8" />
                    <circle cx="347" cy="176" r="3" fill="none" stroke="#aaa" />
                  </Overlay>
                  <SlideText $x={599} $y={146} $s={28.2} $b>Decoder</SlideText>
                  <SlideText $x={599} $y={191} $s={23.3}>The reader</SlideText>
                  <SlideText $x={599} $y={219} $s={23.3}>or listener</SlideText>
                  <SlideText $x={599} $y={275} $s={23.3}>(audience)</SlideText>
                  <SlideText $x={343} $y={213} $s={28.2} $b>Signal</SlideText>
                  <SlideText $x={345} $y={258} $s={23.3}>The text</SlideText>
                  <SlideText $x={346} $y={446} $s={28.2} $b>Reality</SlideText>
                  <SlideText $x={346} $y={492} $s={23.4}>What the text refers to</SlideText>
                </Slide>
              </SlideRow>
            </Canvas>
            <VScroll>
              <ScrollButton><svg width="6" height="4" viewBox="0 0 6 4"><path d="M3 0l3 4H0z" fill="#555" /></svg></ScrollButton>
              <ScrollThumb />
              <PageArrows><ChevronsDown size={10} strokeWidth={3} /></PageArrows>
            </VScroll>
          </EditRow>
          <NotesPane>Click to add notes</NotesPane>
        </Editor>
      </Main>

      <StatusBar>
        SLIDE 9 OF 24
        <StatusRight>
          <StatusItem $mr={15}>
            <svg width="9" height="9" viewBox="0 0 9 9"><path d="M4.500 0l2 2.500h-4zM0 4h9M1 6h7M0 8h9" stroke="#fff" fill="#fff" /></svg>
            NOTES
          </StatusItem>
          <StatusItem $mr={14}>
            <svg width="10" height="9" viewBox="0 0 10 9"><path d="M0 0h10v6.500H5L2.500 9V6.500H0z" fill="#fff" /></svg>
            COMMENTS
          </StatusItem>
          <ViewButton $on>
            <svg width="11" height="9" viewBox="0 0 11 9"><rect x=".5" y=".5" width="10" height="8" fill="none" stroke="#fff" /><rect x="3" y="2" width="5" height="3" fill="#fff" /></svg>
          </ViewButton>
          <ViewButton>
            <svg width="11" height="9" viewBox="0 0 11 9"><path d="M0 0h5v4H0zM6 0h5v4H6zM0 5h5v4H0zM6 5h5v4H6z" fill="#fff" /></svg>
          </ViewButton>
          <ViewButton $dim>
            <svg width="11" height="9" viewBox="0 0 11 9"><path d="M0 1c2-1 4-1 5.500 0 1.500-1 3.500-1 5.500 0v8c-2-1-4-1-5.500 0C4 8 2 8 0 9z" fill="#f3c7ba" /></svg>
          </ViewButton>
          <ViewButton>
            <svg width="11" height="10" viewBox="0 0 11 10"><path d="M0 .5h11M1.500 1v4h8V1M5.500 5v3M3 9.500h5" stroke="#fff" fill="none" /></svg>
          </ViewButton>
          <StatusItem $ml={5} $gap={0}>
            <svg width="7" height="7" viewBox="0 0 7 7"><rect y="2.500" width="6" height="2" fill="#fff" /></svg>
            <ZoomTrack><ZoomThumb /></ZoomTrack>
            <svg width="7" height="7" viewBox="0 0 7 7"><path d="M2.500 0h2v2.500H7v2H4.500V7h-2V4.500H0v-2h2.500z" fill="#fff" /></svg>
          </StatusItem>
          <StatusItem $ml={11} $mr={9}>100%</StatusItem>
          <StatusItem $mr={13}>
            <svg width="10" height="10" viewBox="0 0 10 10">
              <rect x=".5" y=".5" width="9" height="9" fill="none" stroke="#fff" />
              <path d="M2 2l2 2M8 2L6 4M2 8l2-2M8 8L6 6" stroke="#fff" strokeWidth="1.2" />
            </svg>
          </StatusItem>
        </StatusRight>
      </StatusBar>

      <Menu>
        {SECTIONS.map((section) => (
          <React.Fragment key={section.title}>
            <SectionHead>{section.title}</SectionHead>
            <EffectGrid>
              {section.items.map((item) => (
                <EffectCell key={item.label} $active={item.active}>
                  <EffectIcon kind={item.kind} tone={item.tone} letter={item.letter} bar={item.bar} />
                  <EffectLabel>{item.label}</EffectLabel>
                </EffectCell>
              ))}
            </EffectGrid>
          </React.Fragment>
        ))}
        <MoreList>
          <MoreItem><MoreIcon><MiniStar c={TONES.green} size={12} /></MoreIcon><span>More <u>E</u>ntrance Effects...</span></MoreItem>
          <MoreItem><MoreIcon><MiniStar c={TONES.orange} size={12} /></MoreIcon><span>More E<u>m</u>phasis Effects...</span></MoreItem>
          <MoreItem><MoreIcon><MiniStar c={TONES.red} size={12} /></MoreIcon><span>More E<u>x</u>it Effects...</span></MoreItem>
          <MoreItem>
            <MoreIcon>
              <svg width="12" height="12" viewBox="0 0 24 24">
                <polygon points={starStr(12, 13, 10.5)} fill="#fff" stroke="#555" strokeWidth="2" />
                <circle cx="12" cy="3" r="2.500" fill="#3c9a4e" />
                <circle cx="20" cy="6" r="2" fill="#d8492a" />
              </svg>
            </MoreIcon>
            <span>More Motion <u>P</u>aths...</span>
          </MoreItem>
          <MoreItem $off>
            <MoreIcon>
              <svg width="12" height="12" viewBox="0 0 24 24">
                <polygon points={starStr(8, 15, 8)} fill="#a9a9a9" />
                <polygon points={starStr(18, 6, 5)} fill="none" stroke="#b5b5b5" strokeWidth="2" />
              </svg>
            </MoreIcon>
            <span><u>O</u>LE Action Verbs...</span>
          </MoreItem>
        </MoreList>
        <Grip width="8" height="8" viewBox="0 0 8 8">
          <path d="M6 1h1v1H6zM3.500 3.500h1v1h-1zM6 3.500h1v1H6zM1 6h1v1H1zM3.500 6h1v1h-1zM6 6h1v1H6z" fill="#b0b0b0" />
        </Grip>
      </Menu>
    </Page>
  );
}
